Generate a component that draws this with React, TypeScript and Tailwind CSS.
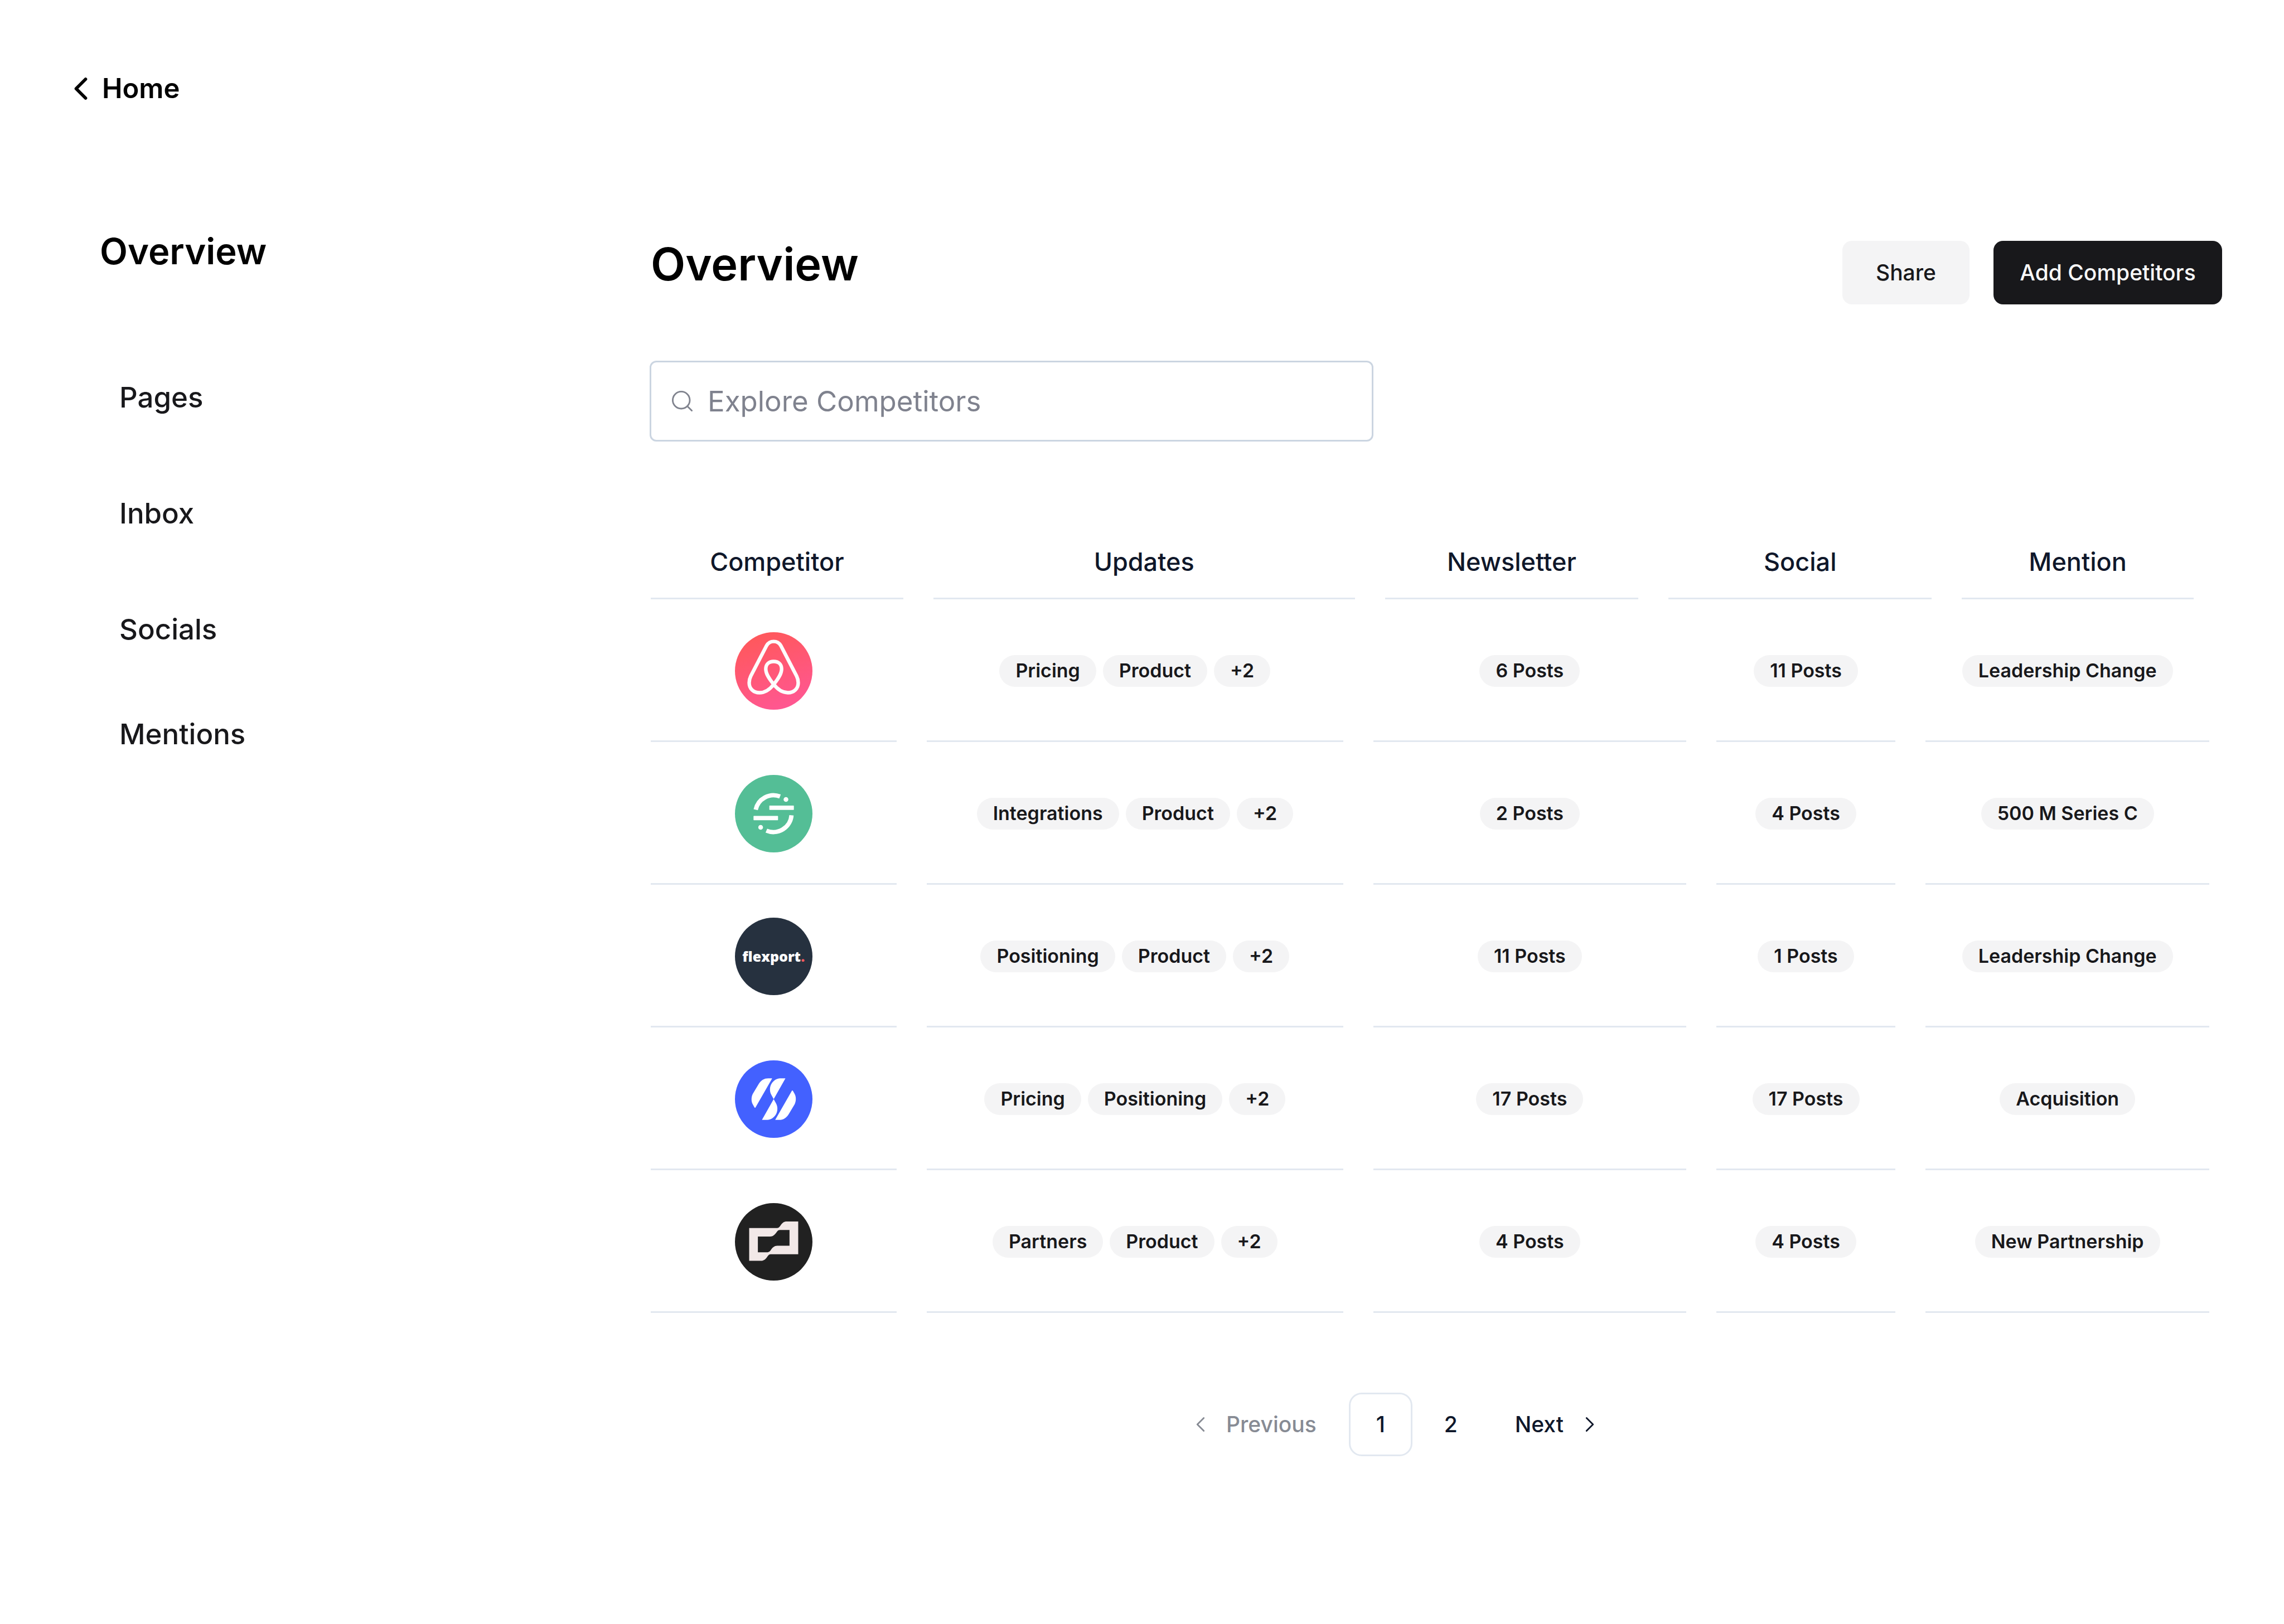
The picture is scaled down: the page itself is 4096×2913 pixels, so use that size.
import { ChevronLeft, ChevronRight } from "lucide-react";
import type { ReactNode } from "react";

function SearchIcon() {
  return (
    <svg viewBox="0 0 52 52" className="size-[37px] shrink-0" aria-hidden="true" fill="none" stroke="#80838e" strokeWidth="4" strokeLinecap="round">
      <circle cx="23.5" cy="23.5" r="21.5" />
      <path d="M39 39L50 50" />
    </svg>
  );
}

function AirbnbLogo() {
  return (
    <svg viewBox="0 0 196 196" className="size-[139px]" role="img" aria-label="Airbnb">
      <defs>
        <linearGradient id="coral" x1="0.3" y1="0" x2="0.65" y2="1">
          <stop offset="0" stopColor="#ff585a" />
          <stop offset="1" stopColor="#ff5793" />
        </linearGradient>
      </defs>
      <circle cx="98" cy="98" r="98" fill="url(#coral)" />
      <path
        d="M98 23.500C90 23.500 84 27 80 34L40 111C37 117 36 122 36 128C36 143 47 153 62 153C76 153 88 145 98 132C110 117 118 105 118 93C118 81 110 74 98 74C86 74 78 81 78 93C78 105 86 117 98 132C108 145 120 153 134 153C149 153 160 143 160 128C160 122 159 117 156 111L116 34C112 27 106 23.500 98 23.500Z"
        fill="none"
        stroke="#fdfdfd"
        strokeWidth="9"
      />
    </svg>
  );
}

function SegmentLogo() {
  return (
    <svg viewBox="0 0 196 196" className="size-[139px]" role="img" aria-label="Segment">
      <circle cx="98" cy="98" r="98" fill="#54be96" />
      <g fill="none" stroke="#fff" strokeWidth="11">
        <path d="M52.500 88A46 46 0 0 1 114 54.500" />
        <path d="M143 102A46 46 0 0 1 79.500 141" />
      </g>
      <g fill="#fff">
        <rect x="87" y="77.500" width="62" height="11" rx="1" />
        <rect x="47" y="103.500" width="62" height="11" rx="1" />
        <circle cx="129" cy="62" r="6" />
        <circle cx="65" cy="132.500" r="6" />
      </g>
    </svg>
  );
}

function FlexportLogo() {
  return (
    <div className="flex size-[139px] items-center justify-center rounded-full bg-[#26313f] font-['Open_Sans',sans-serif] text-[25px] leading-none font-extrabold text-white">
      <span>
        flexport<span className="text-[#f0595f]">.</span>
      </span>
    </div>
  );
}

function SlashesLogo() {
  return (
    <svg viewBox="0 0 196 196" className="size-[139px]" role="img" aria-label="Slashes">
      <circle cx="98" cy="98" r="98" fill="#4361ff" />
      <g fill="#fff">
        <path d="M94 46L52 119Q51 121 49.500 119L45 111C41 104 41 93 45 85L60 60C66 50 74 45.500 84 45.500H93.500Z" />
        <path d="M127.500 46L98 98L92 87C87 78 88 67 92 60C98 50 106 46 114 45.500H127.500Z" />
        <path d="M68.500 150L98 98L104 109C109 118 108 129 104 136C98 146 90 150 82 150.500H68.500Z" />
        <path d="M102 150L144 77Q145 75 146.500 77L151 85C155 92 155 103 151 111L136 136C130 146 122 150.500 112 150.500H102Z" />
      </g>
    </svg>
  );
}

function BrexLogo() {
  return (
    <svg viewBox="0 0 196 196" className="size-[139px]" role="img" aria-label="Brex">
      <circle cx="98" cy="98" r="98" fill="#212121" />
      <path
        fillRule="evenodd"
        fill="#f2e8e7"
        d="M36 63H107Q111 63 114 58.500C119 50 124 46.500 131 46.500H160V129.500H90Q86 129.500 83 134C78 142 73 146 66 146H36ZM58 84.500V124.500H83Q87 124.500 90 120C95 112 100 108 107 108H138V68H113Q109 68 106 72.500C101 80 96 84.500 89 84.500Z"
      />
    </svg>
  );
}

const columns = ["Competitor", "Updates", "Newsletter", "Social", "Mention"];

const rows: { name: string; logo: ReactNode; cells: string[][] }[] = [
  {
    name: "airbnb",
    logo: <AirbnbLogo />,
    cells: [["Pricing", "Product", "+2"], ["6 Posts"], ["11 Posts"], ["Leadership Change"]],
  },
  {
    name: "segment",
    logo: <SegmentLogo />,
    cells: [["Integrations", "Product", "+2"], ["2 Posts"], ["4 Posts"], ["500 M Series C"]],
  },
  {
    name: "flexport",
    logo: <FlexportLogo />,
    cells: [["Positioning", "Product", "+2"], ["11 Posts"], ["1 Posts"], ["Leadership Change"]],
  },
  {
    name: "slashes",
    logo: <SlashesLogo />,
    cells: [["Pricing", "Positioning", "+2"], ["17 Posts"], ["17 Posts"], ["Acquisition"]],
  },
  {
    name: "brex",
    logo: <BrexLogo />,
    cells: [["Partners", "Product", "+2"], ["4 Posts"], ["4 Posts"], ["New Partnership"]],
  },
];

function Badge({ children }: { children: ReactNode }) {
  return (
    <span className="flex h-[57px] items-center rounded-full bg-[#f4f4f5] px-[29px] text-[34px] leading-none font-semibold whitespace-nowrap text-[#18181b]">
      {children}
    </span>
  );
}

export default function App() {
  return (
    <div className="min-h-screen bg-white px-[111px] pt-[125px] font-[Inter,sans-serif] text-black">
      <header className="flex">
        <a href="#home" className="flex items-center gap-[4px] text-[49px] leading-[68px] font-semibold">
          <ChevronLeft size={68} />
          Home
        </a>
      </header>

      <div className="flex pt-[207px]">
        <aside className="w-[1054px] shrink-0 pl-[68px]">
          <h2 className="pt-[11px] text-[65px] leading-[80px] font-semibold">Overview</h2>
          <nav className="flex flex-col pt-[186px] pl-[35px] text-[51px] leading-[72px] font-medium text-[#18181b]">
            <a href="#pages">Pages</a>
            <a href="#inbox" className="pt-[136px]">Inbox</a>
            <a href="#socials" className="pt-[136px]">Socials</a>
            <a href="#mentions" className="pt-[116px]">Mentions</a>
          </nav>
        </aside>

        <main className="min-w-0 flex-1">
          <div className="flex items-start justify-between pt-[32px] pl-[2px]">
            <h1 className="text-[81px] leading-[84px] font-semibold">Overview</h1>
            <div className="flex gap-[43px] text-[39px] font-medium">
              <button className="h-[114px] w-[228px] rounded-[17px] bg-[#f4f4f5] text-[#18181b]">Share</button>
              <button className="h-[114px] w-[410px] rounded-[17px] bg-[#18181b] text-[#fafafa]">Add Competitors</button>
            </div>
          </div>

          <label className="mt-[101px] flex h-[145px] w-[1298px] items-center gap-[27px] rounded-[12px] border-3 border-[#cbd5e1] pl-[37px]">
            <SearchIcon />
            <input
              type="text"
              aria-label="Explore Competitors"
              placeholder="Explore Competitors"
              className="min-w-0 flex-1 bg-transparent text-[51px] leading-[72px] outline-none placeholder:text-[#7f828e]"
            />
          </label>

          <table className="mt-[148px] block pl-[2px] text-[#0f172a]">
            <thead className="block pr-[51px]">
              <tr className="grid grid-cols-[453fr_756fr_455fr_472fr_416fr] gap-[54px]">
                {columns.map((name) => (
                  <th key={name} scope="col" className="border-b-3 border-[#e2e8f0] pt-[36px] pb-[32px] text-center text-[45px] leading-[64px] font-medium">
                    {name}
                  </th>
                ))}
              </tr>
            </thead>
            <tbody className="block pr-[23px]">
              {rows.map((row) => (
                <tr key={row.name} className="grid h-[256px] grid-cols-[441fr_748fr_561fr_322fr_509fr] gap-[54px]">
                  <td className="flex items-center justify-center border-b-3 border-[#e2e8f0] pt-[3px]">{row.logo}</td>
                  {row.cells.map((badges, i) => (
                    <td key={i} className="flex items-center justify-center gap-[12px] border-b-3 border-[#e2e8f0] pt-[3px]">
                      {badges.map((text) => (
                        <Badge key={text}>{text}</Badge>
                      ))}
                    </td>
                  ))}
                </tr>
              ))}
            </tbody>
          </table>

          <nav aria-label="Pagination" className="mt-[143px] flex gap-[12px] pl-[919px] text-[39px] font-medium text-[#0f172a]">
            <button disabled className="flex h-[114px] items-center gap-[23px] px-[46px] text-[#878b94]">
              <ChevronLeft size={46} strokeWidth={1.5} />
              Previous
            </button>
            <button aria-current="page" className="size-[114px] rounded-[23px] border-3 border-[#e2e8f0]">1</button>
            <button className="size-[114px]">2</button>
            <button className="flex h-[114px] items-center gap-[24px] px-[46px]">
              Next
              <ChevronRight size={46} strokeWidth={1.5} />
            </button>
          </nav>
        </main>
      </div>
    </div>
  );
}
